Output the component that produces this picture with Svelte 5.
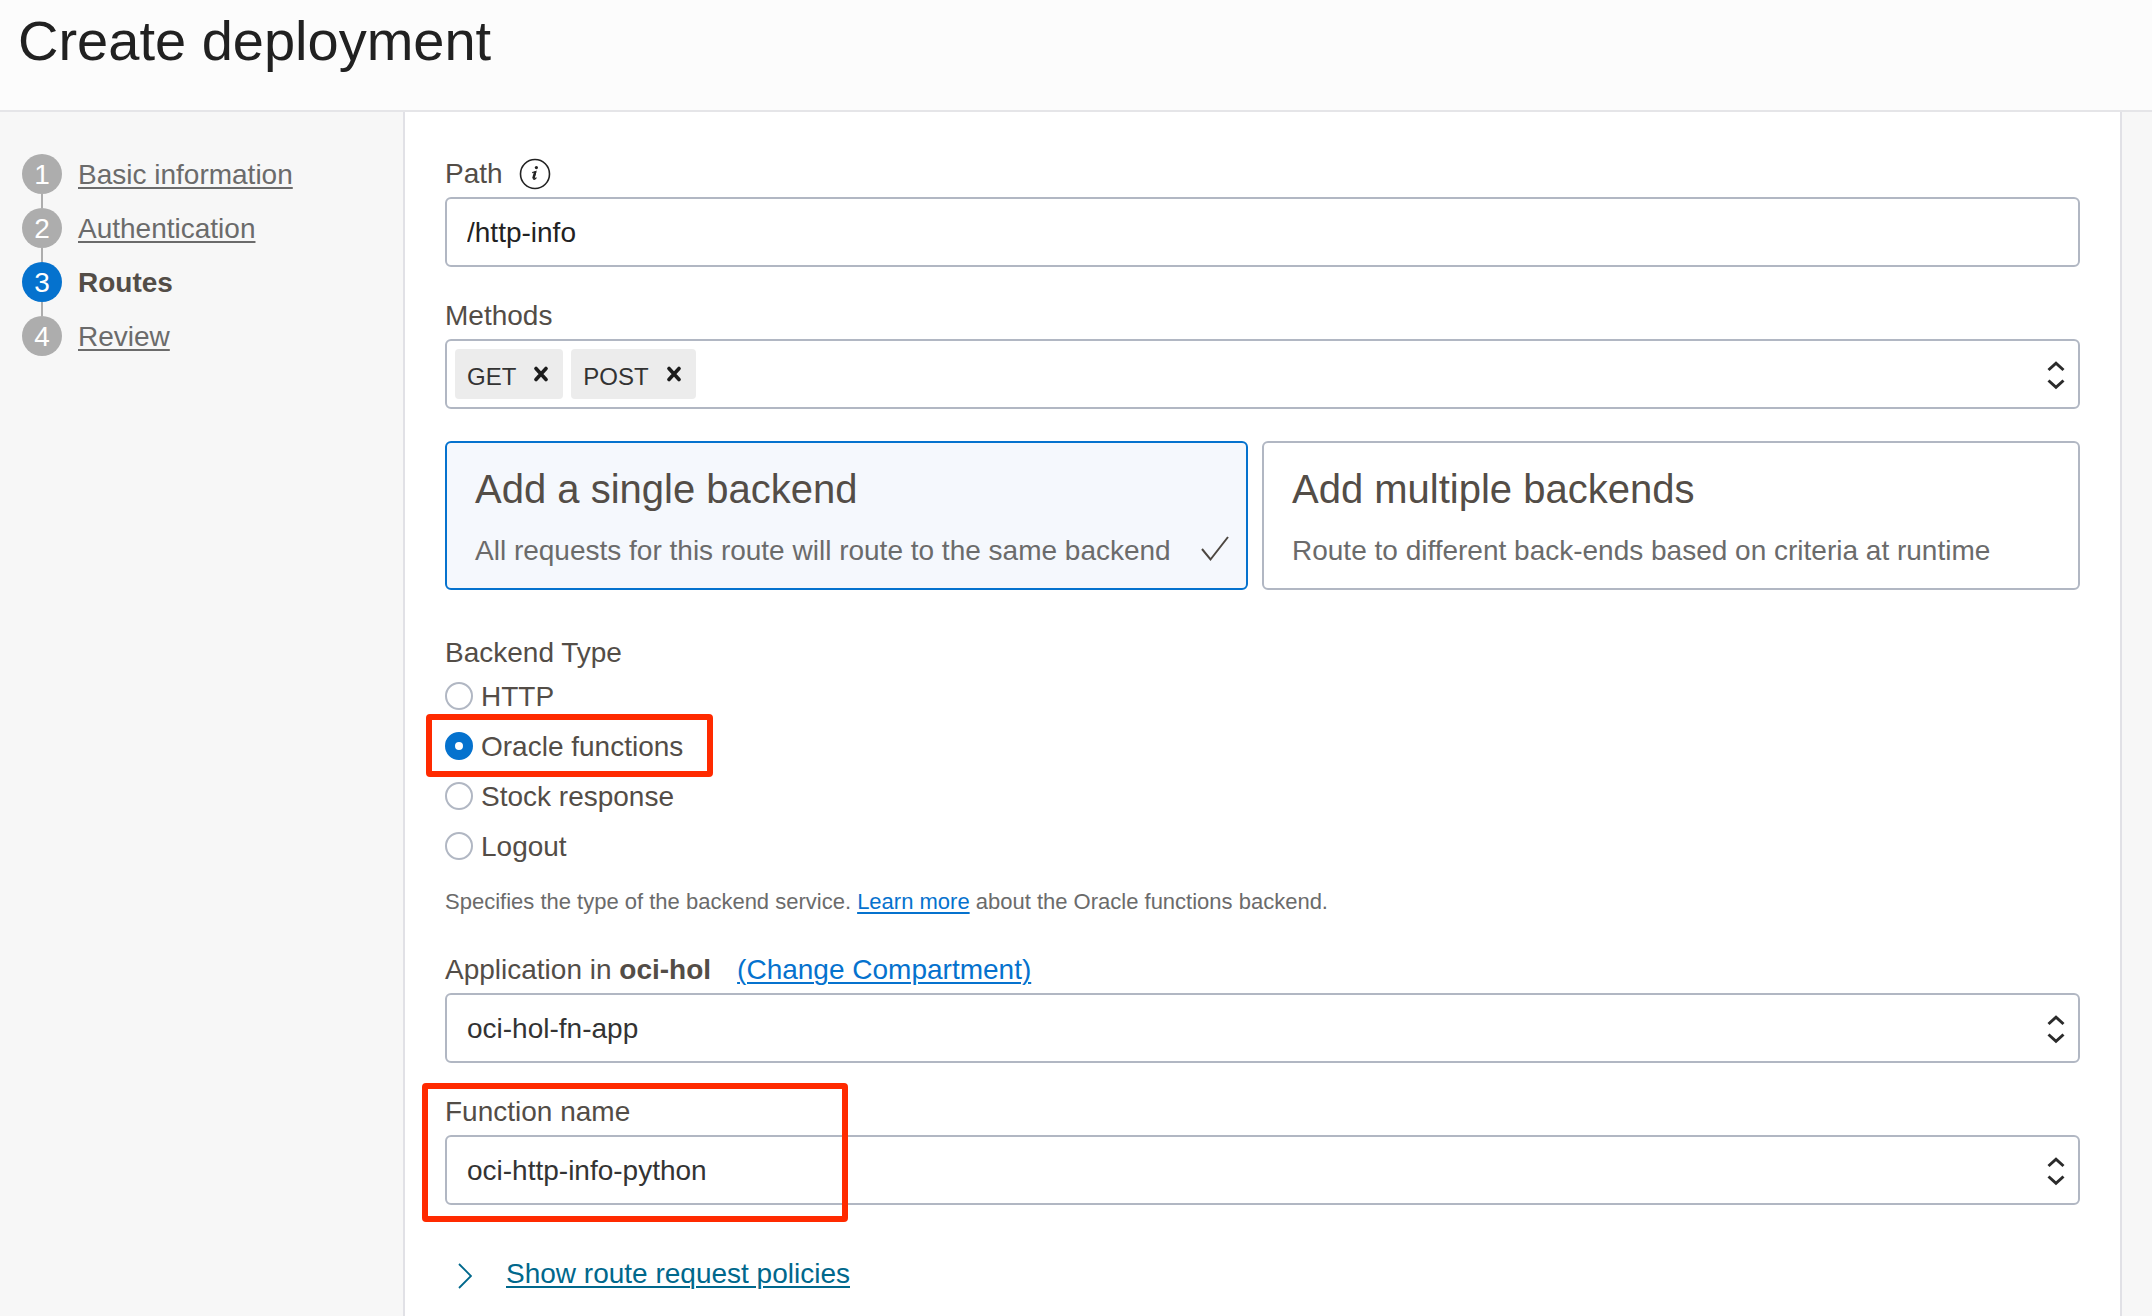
<script lang="ts">
  const steps = [
    { n: 1, label: 'Basic information' },
    { n: 2, label: 'Authentication' },
    { n: 3, label: 'Routes' },
    { n: 4, label: 'Review' }
  ];
  const current = 3;

  const backendTypes = ['HTTP', 'Oracle functions', 'Stock response', 'Logout'];

  let path = $state('/http-info');
  let methods = $state(['GET', 'POST']);
  let backendMode = $state('single');
  let backendType = $state('Oracle functions');
  let application = $state('oci-hol-fn-app');
  let functionName = $state('oci-http-info-python');

  function removeMethod(method: string) {
    methods = methods.filter((m) => m !== method);
  }
</script>

{#snippet carets()}
  <svg class="carets" viewBox="0 0 18 30" aria-hidden="true">
    <path d="M1.5 10 9 3.2l7.5 6.8M1.5 20.5 9 27.3l7.5-6.8" fill="none" stroke="#2b2b2b" stroke-width="3" />
  </svg>
{/snippet}

<div class="page">
  <header><h1>Create deployment</h1></header>

  <div class="body">
    <nav aria-label="Steps">
      <ol>
        {#each steps as step}
          <li class:current={step.n === current}>
            <span class="num">{step.n}</span>
            {#if step.n === current}
              <strong aria-current="step">{step.label}</strong>
            {:else}
              <a href="#step-{step.n}">{step.label}</a>
            {/if}
          </li>
        {/each}
      </ol>
    </nav>

    <main>
      <div class="field">
        <div class="label-row">
          <label for="path">Path</label>
          <button class="info" type="button" aria-label="About path">
            <svg viewBox="0 0 32 32" aria-hidden="true">
              <circle cx="16" cy="16" r="14.5" fill="none" stroke="#222" stroke-width="1.6" />
              <circle cx="17.4" cy="9.6" r="1.6" fill="#222" />
              <path d="M13.2 14.6c1.3-.3 2.4-.6 3.6-1.1l-2 6.9c-.3 1 .4 1.2 1.2.6.6-.4 1-.9 1.4-1.5" fill="none" stroke="#222" stroke-width="1.3" />
              <path d="m16.2 13.8-1.9 6.8" stroke="#222" stroke-width="2.4" />
            </svg>
          </button>
        </div>
        <input id="path" class="box" type="text" bind:value={path} />
      </div>

      <div class="field">
        <div class="label-row"><label for="methods">Methods</label></div>
        <div class="box tags">
          {#each methods as method}
            <span class="tag">
              <span class="tag-text">{method}</span>
              <button type="button" aria-label="Remove {method}" onclick={() => removeMethod(method)}>
                <svg viewBox="0 0 14 16" aria-hidden="true">
                  <path d="m2 2.5 10 11M12 2.5 2 13.5" stroke="#1c1c1c" stroke-width="3.6" stroke-linecap="round" />
                </svg>
              </button>
            </span>
          {/each}
          <input id="methods" type="text" />
          <button class="open" type="button" aria-label="Show methods">{@render carets()}</button>
        </div>
      </div>

      <div class="cards">
        <button
          type="button"
          class="card"
          class:selected={backendMode === 'single'}
          aria-pressed={backendMode === 'single'}
          onclick={() => (backendMode = 'single')}
        >
          <span class="card-title">Add a single backend</span>
          <span class="card-desc">
            All requests for this route will route to the same backend
            {#if backendMode === 'single'}
              <svg viewBox="0 0 28 30" aria-hidden="true">
                <path d="m1 13 8.5 10.5L27 1" fill="none" stroke="#4d4741" stroke-width="2" />
              </svg>
            {/if}
          </span>
        </button>
        <button
          type="button"
          class="card"
          class:selected={backendMode === 'multiple'}
          aria-pressed={backendMode === 'multiple'}
          onclick={() => (backendMode = 'multiple')}
        >
          <span class="card-title">Add multiple backends</span>
          <span class="card-desc">Route to different back-ends based on criteria at runtime</span>
        </button>
      </div>

      <fieldset>
        <legend>Backend Type</legend>
        <div class="options">
          {#each backendTypes as type}
            <div class="option">
              <label>
                <input type="radio" name="backend-type" value={type} bind:group={backendType} />
                <span>{type}</span>
              </label>
              {#if type === 'Oracle functions'}<span class="callout callout-option"></span>{/if}
            </div>
          {/each}
        </div>
      </fieldset>
      <p class="help">
        Specifies the type of the backend service. <a href="#learn-more">Learn more</a> about the Oracle functions backend.
      </p>

      <div class="field">
        <div class="label-row app-label">
          <label for="application">Application in <strong>oci-hol</strong></label>
          <a href="#change-compartment">(Change Compartment)</a>
        </div>
        <div class="select">
          <select id="application" class="box" bind:value={application}>
            <option>oci-hol-fn-app</option>
          </select>
          {@render carets()}
        </div>
      </div>

      <div class="field">
        <div class="label-row"><label for="function">Function name</label></div>
        <div class="select">
          <select id="function" class="box" bind:value={functionName}>
            <option>oci-http-info-python</option>
          </select>
          {@render carets()}
        </div>
        <span class="callout callout-field"></span>
      </div>

      <div class="policies">
        <svg viewBox="0 0 14 30" aria-hidden="true">
          <path d="m1 5 12 12L1 29" fill="none" stroke="#00688c" stroke-width="1.8" />
        </svg>
        <a href="#policies">Show route request policies</a>
      </div>
    </main>
  </div>
</div>

<style>
  :global(body) {
    margin: 0;
  }

  .page {
    display: flex;
    flex-direction: column;
    min-height: 100vh;
    background: #f7f7f7;
    color: #534d47;
    font-family: 'Liberation Sans', Arial, sans-serif;
    font-size: 28px;
    line-height: 32px;
  }

  .page *,
  .page *::before,
  .page *::after {
    box-sizing: border-box;
  }

  button,
  input,
  select {
    margin: 0;
    padding: 0;
    border: 0;
    background: none;
    color: inherit;
    font: inherit;
  }

  svg {
    display: block;
    flex: none;
  }

  a {
    color: #0572ce;
    text-decoration-thickness: 2px;
    text-underline-offset: 3px;
  }

  header {
    padding: 9px 18px 37px;
    background: #fcfcfc;
    border-bottom: 2px solid #e5e5e8;
  }

  h1 {
    margin: 0;
    color: #212121;
    font-size: 56px;
    font-weight: 400;
    line-height: 64px;
  }

  .body {
    display: flex;
    flex: 1;
    padding-right: 30px;
  }

  nav {
    flex: 0 0 403px;
    padding: 42px 22px;
  }

  ol {
    display: flex;
    flex-direction: column;
    gap: 14px;
    margin: 0;
    padding: 0;
    list-style: none;
  }

  li {
    position: relative;
    display: flex;
    align-items: center;
    gap: 16px;
    height: 40px;
  }

  li:not(:last-child)::after {
    content: '';
    position: absolute;
    top: 40px;
    left: 19px;
    width: 2px;
    height: 14px;
    background: #adadad;
  }

  li a {
    color: #6b6b6b;
  }

  li a,
  li strong {
    padding-top: 2px;
  }

  .num {
    width: 40px;
    height: 40px;
    border-radius: 50%;
    background: #adadad;
    color: #fff;
    line-height: 42px;
    text-align: center;
  }

  .current .num {
    background: #0572ce;
  }

  main {
    flex: 1;
    min-width: 0;
    padding: 45px 40px 24px;
    background: #fff;
    border: solid #e1e1e6;
    border-width: 0 2px;
  }

  .field {
    position: relative;
    margin-bottom: 32px;
  }

  .label-row {
    display: flex;
    align-items: center;
    height: 32px;
    margin-bottom: 8px;
    padding-top: 2px;
  }

  .info {
    margin-left: 16px;
  }

  .info svg {
    width: 32px;
    height: 32px;
  }

  .app-label {
    gap: 26px;
  }

  .box {
    display: block;
    width: 100%;
    height: 70px;
    padding: 2px 20px 0;
    border: 2px solid #b1b7c3;
    border-radius: 6px;
    background: #fff;
    color: #222;
  }

  .tags {
    display: flex;
    align-items: center;
    gap: 8px;
    padding: 0 13px 0 8px;
  }

  .tags > input {
    flex: 1;
    min-width: 0;
    outline: 0;
  }

  .tag {
    display: flex;
    align-items: center;
    gap: 18px;
    height: 50px;
    padding: 0 15px 0 12px;
    border-radius: 4px;
    background: #ececec;
    color: #333;
    font-size: 24px;
  }

  .tag-text {
    padding-top: 5px;
  }

  .carets {
    width: 18px;
    height: 30px;
  }

  .tag svg {
    width: 14px;
    height: 16px;
  }

  .open {
    padding-top: 2px;
  }

  .select {
    position: relative;
  }

  .select .carets {
    position: absolute;
    top: 21px;
    right: 15px;
    pointer-events: none;
  }

  select.box {
    appearance: none;
    color: #333;
  }

  .cards {
    display: grid;
    grid-template-columns: 803fr 818fr;
    gap: 14px;
    margin-bottom: 46px;
  }

  .card {
    display: flex;
    flex-direction: column;
    gap: 23px;
    padding: 23px 17px 21px 28px;
    border: 2px solid #b1b7c3;
    border-radius: 6px;
    text-align: left;
  }

  .card.selected {
    border-color: #0572ce;
    background: #f5f8fd;
  }

  .card-title {
    font-size: 40px;
    line-height: 46px;
  }

  .card-desc {
    display: flex;
    align-items: center;
    justify-content: space-between;
    width: 100%;
    color: #6b6b6b;
    white-space: nowrap;
  }

  .card-desc svg {
    width: 28px;
    height: 30px;
  }

  fieldset {
    min-width: 0;
    margin: 0;
    padding: 0;
    border: 0;
  }

  legend {
    padding: 1px 0 0;
  }

  .options {
    display: flex;
    flex-direction: column;
    align-items: flex-start;
    gap: 18px;
    padding-top: 11px;
  }

  .option {
    position: relative;
  }

  .option label {
    display: flex;
    align-items: center;
    gap: 8px;
    height: 32px;
  }

  .option label span {
    padding-top: 2px;
  }

  input[type='radio'] {
    appearance: none;
    width: 28px;
    height: 28px;
    border: 2px solid #b1b7c3;
    border-radius: 50%;
    background: #fff;
  }

  input[type='radio']:checked {
    border: 10px solid #0572ce;
  }

  .help {
    margin: 27px 0 38px;
    color: #6b6b6b;
    font-size: 22px;
    line-height: 26px;
  }

  .callout {
    position: absolute;
    border: 6px solid #ff2a00;
    border-radius: 4px;
    pointer-events: none;
  }

  .callout-option {
    top: -16px;
    left: -19px;
    width: 287px;
    height: 63px;
  }

  .callout-field {
    top: -12px;
    left: -23px;
    width: 426px;
    height: 139px;
  }

  .policies {
    display: flex;
    align-items: center;
    gap: 34px;
    padding: 21px 13px 0;
  }

  .policies svg {
    width: 14px;
    height: 30px;
  }

  .policies a {
    color: #00688c;
  }
</style>
